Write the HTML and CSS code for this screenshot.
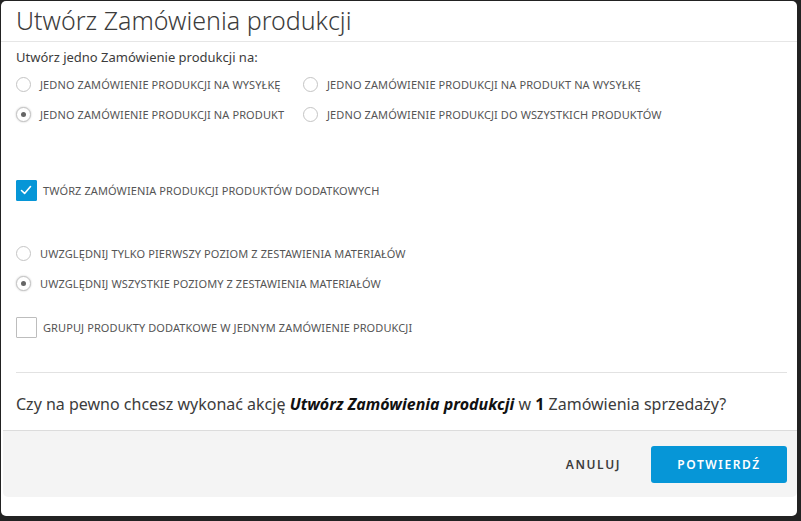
FILE: index.html
```html
<!DOCTYPE html>
<html lang="pl">
<head>
<meta charset="utf-8">
<title>Utwórz Zamówienia produkcji</title>
<link rel="stylesheet" href="styles.css">
</head>
<body>
<div class="dialog">
  <div class="header"><h1 class="title">Utwórz Zamówienia produkcji</h1></div>
  <div class="content">
    <p class="lead">Utwórz jedno Zamówienie produkcji na:</p>
    <div class="radio-grid">
      <label class="opt opt-a"><span class="radio"></span><span class="txt">JEDNO ZAMÓWIENIE PRODUKCJI NA WYSYŁKĘ</span></label>
      <label class="opt"><span class="radio"></span><span class="txt">JEDNO ZAMÓWIENIE PRODUKCJI NA PRODUKT NA WYSYŁKĘ</span></label>
      <label class="opt opt-a"><span class="radio checked"></span><span class="txt">JEDNO ZAMÓWIENIE PRODUKCJI NA PRODUKT</span></label>
      <label class="opt"><span class="radio"></span><span class="txt">JEDNO ZAMÓWIENIE PRODUKCJI DO WSZYSTKICH PRODUKTÓW</span></label>
    </div>
    <label class="check-row check-first"><span class="checkbox checked"><svg viewBox="0 0 20 20" width="20" height="20"><path d="M5.5 10.5 L8.6 13.4 L14.5 6.6" fill="none" stroke="#fff" stroke-width="1.6" stroke-linecap="round" stroke-linejoin="round"/></svg></span><span class="txt">TWÓRZ ZAMÓWIENIA PRODUKCJI PRODUKTÓW DODATKOWYCH</span></label>
    <div class="radio-list">
      <label class="opt"><span class="radio"></span><span class="txt">UWZGLĘDNIJ TYLKO PIERWSZY POZIOM Z ZESTAWIENIA MATERIAŁÓW</span></label>
      <label class="opt"><span class="radio checked"></span><span class="txt">UWZGLĘDNIJ WSZYSTKIE POZIOMY Z ZESTAWIENIA MATERIAŁÓW</span></label>
    </div>
    <label class="check-row check-second"><span class="checkbox"></span><span class="txt">GRUPUJ PRODUKTY DODATKOWE W JEDNYM ZAMÓWIENIE PRODUKCJI</span></label>
    <div class="divider"></div>
    <p class="question">Czy na pewno chcesz wykonać akcję <b><i>Utwórz Zamówienia produkcji</i></b> w <b>1</b> Zamówienia sprzedaży?</p>
  </div>
  <div class="footer">
    <button class="btn btn-cancel">ANULUJ</button>
    <button class="btn btn-primary">POTWIERDŹ</button>
  </div>
</div>
</body>
</html>
```
FILE: styles.css
```css
* { box-sizing: border-box; }
html, body { margin: 0; padding: 0; }
body {
  background: #222222;
  width: 801px;
  height: 521px;
  overflow: hidden;
  font-family: "Noto Sans", "Open Sans", sans-serif;
  padding: 1px 0 0 1px;
}
.dialog {
  width: 796px;
  height: 515px;
  background: #ffffff;
  border-radius: 5px;
  display: flex;
  flex-direction: column;
  overflow: hidden;
}
.header {
  height: 41px;
  border-bottom: 1px solid #e6e6e6;
  padding: 0 15px;
}
.title {
  margin: 0;
  font-weight: 300;
  font-size: 25px;
  line-height: 38px;
  color: #3c3c3c;
}
.content {
  padding: 0 10px 0 15px;
  flex: 1;
}
.lead {
  margin: 6px 0 0;
  font-size: 13px;
  line-height: 18px;
  color: #3c3c3c;
}
.radio-grid {
  display: grid;
  grid-template-columns: 287px auto;
  row-gap: 11px;
  margin-top: 9px;
}
.opt {
  display: flex;
  align-items: center;
  height: 19px;
  gap: 9px;
}
.txt {
  font-size: 11px;
  color: #555555;
  letter-spacing: 0.1px;
  white-space: nowrap;
}
.radio {
  width: 15px;
  height: 15px;
  border-radius: 50%;
  border: 1px solid #c4c4c4;
  background: #fff;
  flex: none;
  position: relative;
}
.radio.checked {
  box-shadow: 0 0 2px rgba(0,0,0,0.25);
}
.radio.checked::after {
  content: "";
  position: absolute;
  left: 4px; top: 4px;
  width: 5px; height: 5px;
  border-radius: 50%;
  background: #666;
}
.check-row {
  display: flex;
  align-items: center;
  gap: 6px;
}
.check-first { margin-top: 56px; }
.check-second { margin-top: 24px; }
.checkbox {
  width: 21px;
  height: 21px;
  border: 1px solid #bdbdbd;
  border-radius: 1px;
  background: #fff;
  flex: none;
  display: flex;
}
.checkbox.checked {
  background: #0696d7;
  border-color: #0696d7;
}
.checkbox svg { display: block; margin: -1px; }
.radio-list {
  display: flex;
  flex-direction: column;
  gap: 11px;
  margin-top: 43px;
}
.divider {
  margin-top: 34px;
  height: 1px;
  background: #e2e2e2;
}
.question {
  margin: 19px 0 0;
  font-size: 16px;
  line-height: 24px;
  color: #3c3c3c;
}
.question b { color: #111; }
.footer {
  margin: 0 0 19px 2px;
  height: 67px;
  background: #f4f4f4;
  border-top: 1px solid #dcdcdc;
  border-radius: 0 0 5px 5px;
  display: flex;
  align-items: center;
  justify-content: flex-end;
  padding-right: 10px;
  gap: 30px;
}
.btn {
  font-family: "Noto Sans", "Open Sans", sans-serif;
  font-size: 12px;
  font-weight: 600;
  letter-spacing: 1.6px;
  border: none;
  border-radius: 3px;
  cursor: pointer;
}
.btn-cancel {
  background: transparent;
  color: #3c3c3c;
  padding: 0;
}
.btn-primary {
  background: #0696d7;
  color: #ffffff;
  width: 136px;
  height: 37px;
}
```
